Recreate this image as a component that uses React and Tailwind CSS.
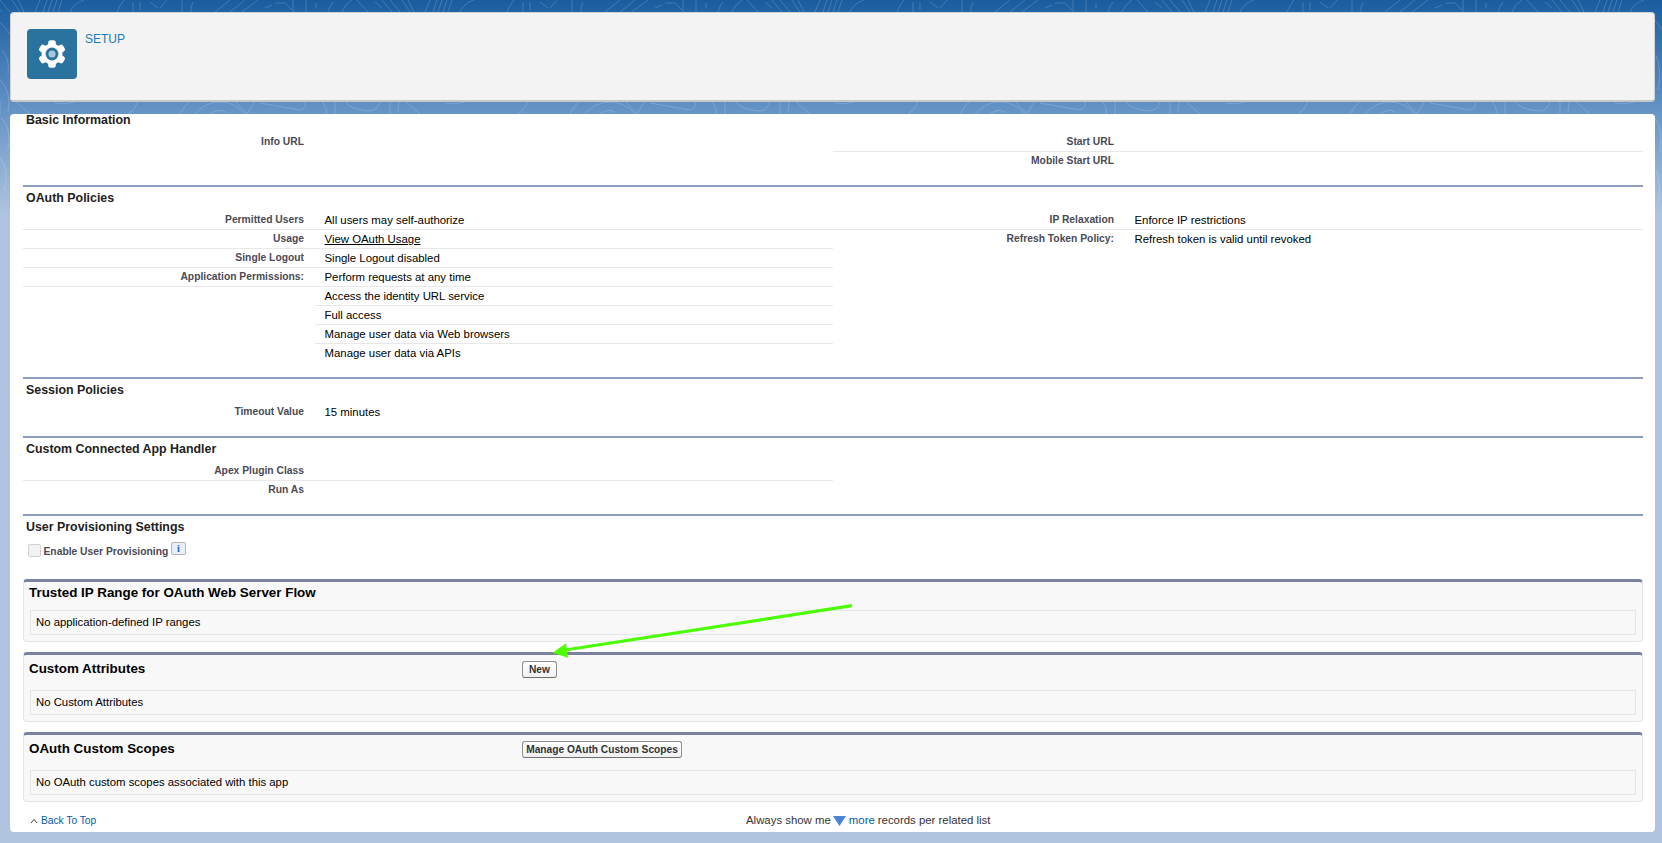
import React from "react";

const hrLine = "border-t-2 border-[#8e9dbf]";

function Row({ label, children, line = false, labelLine = line }) {
  return (
    <div className="flex h-[19px]">
      <div className={`w-[292px] shrink-0 pr-[11px] text-right text-[10.3px] leading-[17px] font-bold text-[#4a4a56] ${labelLine ? "border-b border-[#e8e8e8]" : ""}`}>
        {label}
      </div>
      <div className={`flex-1 pl-[9.5px] text-[11.4px] leading-[18px] text-black ${line ? "border-b border-[#e8e8e8]" : ""}`}>
        {children}
      </div>
    </div>
  );
}

function Heading({ children, className = "h-[22px]" }) {
  return (
    <div className={`flex items-center pl-[3px] text-[12.4px] font-bold text-[#222222] ${className}`}>
      {children}
    </div>
  );
}

function Panel({ title, button, text, buttonClass = "" }) {
  return (
    <div className="rounded-[4px] border border-t-[3px] border-[#e6e6e6] border-t-[#7a829f] bg-[#f8f8f8] pb-[6px]">
      {button ? (
        <div className="flex h-[30px] items-center pl-[5px]">
          <div className="mb-[1px] w-[493px] text-[13.4px] font-bold text-black">{title}</div>
          <button className={`mb-[1px] flex h-[17px] items-center justify-center rounded-[3px] border border-[#8f8f8f] border-b-[#6f6f6f] bg-gradient-to-b from-[#ffffff] to-[#f0f0f0] text-[10.2px] font-bold text-[#333333] ${buttonClass}`}>
            {button}
          </button>
        </div>
      ) : (
        <div className="flex h-[22px] items-center pl-[5px] text-[13.4px] font-bold text-black">{title}</div>
      )}
      <div className={`${button ? "mt-[5px]" : "mt-[6px]"} mx-[6px] flex h-[25px] items-center border border-[#e3e5e7] pl-[5px] text-[11.35px] text-black`}>
        {text}
      </div>
    </div>
  );
}

function Gear() {
  const teeth = [0, 60, 120, 180, 240, 300];
  return (
    <svg width="30" height="30" viewBox="0 0 30 30">
      <circle cx="15" cy="15" r="10.5" fill="#ffffff" />
      {teeth.map((a) => (
        <rect key={a} x="11.2" y="1.2" width="7.6" height="8" rx="2.4" fill="#ffffff" transform={`rotate(${a} 15 15)`} />
      ))}
      <circle cx="15" cy="15" r="6.4" fill="#2a739e" />
      <circle cx="15" cy="15" r="3.6" fill="#ffffff" fillOpacity="0.6" />
    </svg>
  );
}

function Contours() {
  return (
    <svg className="pointer-events-none absolute inset-0 h-full w-full" aria-hidden="true">
      <defs>
        <pattern id="contours" width="390" height="843" patternUnits="userSpaceOnUse" patternTransform="translate(10 0)">
          <path
            fill="none"
            stroke="#ffffff"
            strokeOpacity="0.17"
            strokeWidth="1"
            d="M2 0L10 12M8 0L14 12M25 12L30 0M33 12L37 0M38 12L42 0M43 12L47 0M48 12L52 0M60 12Q64 3 74 0M107 12Q110 5 114 0M123 12V2M130 10V2M140 2L148 8M157 0L150 8M172 0V12M183 2Q180 8 181 12M205 12L220 0M220 12L235 0M232 12L248 0M255 8L262 5M265 3L275 3L282 10M283 0V12M296 0V12M306 3V8M318 12Q320 5 323 2M332 12Q335 4 342 0M347 0L358 12M365 2L372 8M372 0L382 12M380 0L390 12
            M5 101L20 114M45 103Q55 105 65 102M128 101Q125 110 118 114M170 114Q175 105 180 101M185 114Q195 102 210 102Q225 102 235 114M200 114Q208 108 215 112M225 101L237 114L245 101M250 103L290 110Q297 108 295 101M312 101Q318 110 316 114M325 101V114M335 101Q340 110 360 111Q368 110 370 101M380 101V114
            M380 22L390 34M382 50Q390 58 388 74M380 80Q392 92 388 112M381 118Q392 128 388 150M380 158Q390 170 384 190
            M85 20L92 30M86 55Q92 70 88 90M85 118Q93 130 90 152M86 170Q92 185 88 205"
          />
        </pattern>
      </defs>
      <rect width="100%" height="100%" fill="url(#contours)" />
    </svg>
  );
}

export default function App() {
  return (
    <div className="relative h-[843px] overflow-hidden bg-[linear-gradient(#195d9f_0px,#6191c4_105px,#b0c4df_215px)] px-[10px] pt-[12px] pr-[7px] [font-family:'Liberation_Sans',Arial,sans-serif]">
      <Contours />

      <div className="relative flex h-[90px] rounded-[4px] border border-b-2 border-[#d2d2d2] border-b-[#c6c6c6] bg-[#f3f3f3] pt-[16px] pl-[16px]">
        <div className="flex h-[50px] w-[50px] items-center justify-center rounded-[4px] bg-[#2a739e]">
          <Gear />
        </div>
        <a className="ml-[8px] text-[12px] leading-[21px] text-[#1b7ab8]">SETUP</a>
      </div>

      <div className="relative mt-[12px] h-[718px] rounded-[4px] bg-white pr-[12px] pl-[13px]">
        <Heading className="h-[12px]">Basic Information</Heading>
        <div className="grid grid-cols-2 pt-[7px] pb-[14px]">
          <div>
            <Row label="Info URL" />
          </div>
          <div>
            <Row label="Start URL" line />
            <Row label="Mobile Start URL" />
          </div>
        </div>

        <div className={hrLine}>
          <Heading>OAuth Policies</Heading>
          <div className="grid grid-cols-2 pt-[2px] pb-[14px]">
            <div>
              <Row label="Permitted Users" line>All users may self-authorize</Row>
              <Row label="Usage" line><a className="underline">View OAuth Usage</a></Row>
              <Row label="Single Logout" line>Single Logout disabled</Row>
              <Row label="Application Permissions:" line>Perform requests at any time</Row>
              <Row line labelLine={false}>Access the identity URL service</Row>
              <Row line labelLine={false}>Full access</Row>
              <Row line labelLine={false}>Manage user data via Web browsers</Row>
              <Row>Manage user data via APIs</Row>
            </div>
            <div>
              <Row label="IP Relaxation" line>Enforce IP restrictions</Row>
              <Row label="Refresh Token Policy:">Refresh token is valid until revoked</Row>
            </div>
          </div>
        </div>

        <div className={hrLine}>
          <Heading>Session Policies</Heading>
          <div className="grid grid-cols-2 pt-[2px] pb-[14px]">
            <Row label="Timeout Value">15 minutes</Row>
          </div>
        </div>

        <div className={hrLine}>
          <Heading>Custom Connected App Handler</Heading>
          <div className="grid grid-cols-2 pt-[2px] pb-[14px]">
            <div>
              <Row label="Apex Plugin Class" line />
              <Row label="Run As" />
            </div>
          </div>
        </div>

        <div className={`${hrLine} h-[65px]`}>
          <Heading>User Provisioning Settings</Heading>
          <div className="flex items-start pt-[4px] pl-[4.5px]">
            <input type="checkbox" disabled className="mt-[2px] h-[13px] w-[13px] appearance-none rounded-[2px] border border-[#d2d2d2] bg-[#f2f2f2]" />
            <span className="mt-[2px] ml-[3px] text-[10.3px] leading-[15px] font-bold text-[#4a4a56]">Enable User Provisioning</span>
            <span className="ml-[3px] flex h-[13px] w-[14.5px] items-center justify-center rounded-[2px] border border-[#b5b5b5] bg-[#e8eff8] text-[10px] font-bold text-[#1a5fc8] [font-family:'Liberation_Serif',serif]">i</span>
          </div>
        </div>

        <div className="flex flex-col gap-[10px]">
          <Panel title="Trusted IP Range for OAuth Web Server Flow" text="No application-defined IP ranges" />
          <Panel title="Custom Attributes" button="New" buttonClass="w-[35px]" text="No Custom Attributes" />
          <Panel title="OAuth Custom Scopes" button="Manage OAuth Custom Scopes" buttonClass="w-[160px]" text="No OAuth custom scopes associated with this app" />
        </div>

        <div className="flex h-[30px] items-center pt-[8px] text-[10.2px]">
          <div className="flex w-[723px] items-center pl-[7px]">
            <svg width="8" height="6" viewBox="0 0 8 6" className="mr-[3px]">
              <path d="M1 5L4 1.5L7 5" fill="none" stroke="#444444" strokeWidth="1" />
            </svg>
            <a className="text-[#015ba7]">Back To Top</a>
          </div>
          <div className="flex items-center text-[11.4px] text-[#333333]">
            Always show me
            <svg width="13" height="10" viewBox="0 0 13 10" className="mx-[2.5px]">
              <path d="M0 0H13L6.5 10Z" fill="#4a86d8" />
            </svg>
            <a className="text-[#015ba7]">more</a>
            <span className="ml-[3px]">records per related list</span>
          </div>
        </div>
      </div>

      <svg className="pointer-events-none absolute top-0 left-0" width="1662" height="843" aria-hidden="true">
        <path d="M852 605.7L562 650.5" stroke="#4efc03" strokeWidth="3.2" fill="none" />
        <path d="M552.7 652.7L566 643.3L568 657.7Z" fill="#4efc03" />
      </svg>
    </div>
  );
}
